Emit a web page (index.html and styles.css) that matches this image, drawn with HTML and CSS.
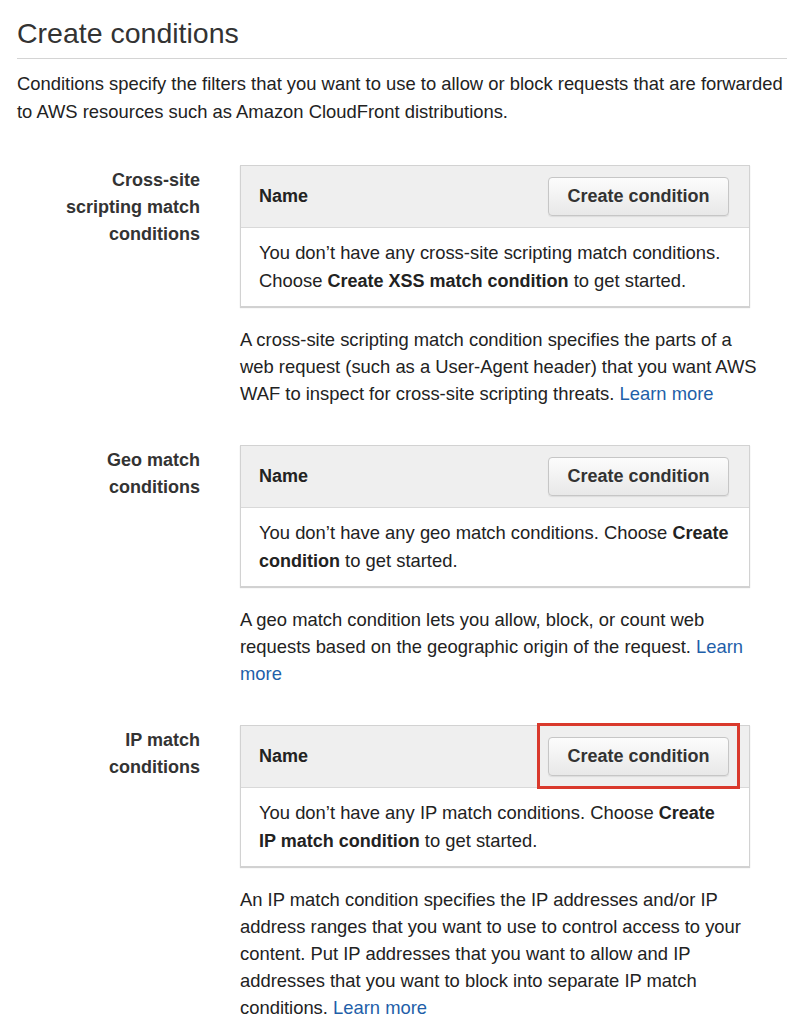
FILE: index.html
```html
<!DOCTYPE html>
<html>
<head>
<meta charset="utf-8">
<link rel="stylesheet" href="styles.css">
</head>
<body>
<div class="page">
  <h1 class="title">Create conditions</h1>
  <p class="intro">Conditions specify the filters that you want to use to allow or block requests that are forwarded to AWS resources such as Amazon CloudFront distributions.</p>

  <section class="cond">
    <div class="label">Cross-site scripting match conditions</div>
    <div class="main">
      <div class="table">
        <div class="thead">
          <span class="th">Name</span>
          <button class="btn">Create condition</button>
        </div>
        <div class="tbody">You don’t have any cross-site scripting match conditions. Choose <b>Create XSS match condition</b> to get started.</div>
      </div>
      <p class="desc">A cross-site scripting match condition specifies the parts of a web request (such as a User-Agent header) that you want AWS WAF to inspect for cross-site scripting threats. <a href="#">Learn more</a></p>
    </div>
  </section>

  <section class="cond">
    <div class="label">Geo match conditions</div>
    <div class="main">
      <div class="table">
        <div class="thead">
          <span class="th">Name</span>
          <button class="btn">Create condition</button>
        </div>
        <div class="tbody">You don’t have any geo match conditions. Choose <b>Create condition</b> to get started.</div>
      </div>
      <p class="desc">A geo match condition lets you allow, block, or count web requests based on the geographic origin of the request. <a href="#">Learn more</a></p>
    </div>
  </section>

  <section class="cond">
    <div class="label">IP match conditions</div>
    <div class="main">
      <div class="table">
        <div class="thead">
          <span class="th">Name</span>
          <button class="btn highlighted">Create condition</button>
        </div>
        <div class="tbody">You don’t have any IP match conditions. Choose <b>Create IP match condition</b> to get started.</div>
      </div>
      <p class="desc">An IP match condition specifies the IP addresses and/or IP address ranges that you want to use to control access to your content. Put IP addresses that you want to allow and IP addresses that you want to block into separate IP match conditions. <a href="#">Learn more</a></p>
    </div>
  </section>
</div>
</body>
</html>
```

FILE: styles.css
```css
* { box-sizing: border-box; }
html, body { margin: 0; padding: 0; background: #fff; }
body {
  font-family: "Liberation Sans", Arial, Helvetica, sans-serif;
  color: #222;
  font-size: 18.4px;
}
.page {
  width: 770px;
  margin-left: 17px;
  padding-top: 15px;
}
.title {
  margin: 0;
  font-size: 28.5px;
  font-weight: normal;
  line-height: 36px;
  color: #333;
  padding-bottom: 7px;
  border-bottom: 1px solid #d4d4d4;
}
.intro {
  margin: 11px 0 0 0;
  line-height: 28px;
}
.cond {
  display: flex;
  gap: 40px;
  align-items: flex-start;
}
.cond:first-of-type { margin-top: 39px; }
.cond + .cond { margin-top: 38px; }
.label {
  width: 183px;
  padding-left: 33px;
  padding-top: 2px;
  text-align: right;
  font-weight: bold;
  font-size: 18px;
  line-height: 27px;
  color: #333;
}
.main { width: 520px; }
.table {
  width: 510px;
  border: 1px solid #d2d2d2;
  box-shadow: 0 1px 1px rgba(0,0,0,0.18);
  background: #fff;
}
.thead {
  display: flex;
  align-items: center;
  justify-content: space-between;
  height: 62px;
  padding: 0 20px 0 18px;
  background: #efefef;
  border-bottom: 1px solid #d9d9d9;
}
.th {
  font-weight: bold;
  font-size: 18px;
  color: #222;
}
.btn {
  position: relative;
  width: 181px;
  height: 39px;
  font-family: inherit;
  font-weight: bold;
  font-size: 18px;
  color: #333;
  border: 1px solid #c6c6c6;
  border-radius: 4px;
  background: linear-gradient(#fcfcfc, #e8e8e8);
  box-shadow: 0 1px 1px rgba(0,0,0,0.08);
  padding: 0;
}
.highlighted::after {
  content: "";
  position: absolute;
  left: -12px;
  right: -12px;
  top: -15px;
  bottom: -14px;
  border: 3px solid #d9392c;
}
.tbody {
  padding: 11px 18px 11px 18px;
  line-height: 28px;
}
.tbody b {
  font-size: 18px;
  color: #222;
}
.desc {
  margin: 19px 0 0 0;
  line-height: 27px;
}
.desc a {
  color: #1f5fa9;
  text-decoration: none;
}
```
